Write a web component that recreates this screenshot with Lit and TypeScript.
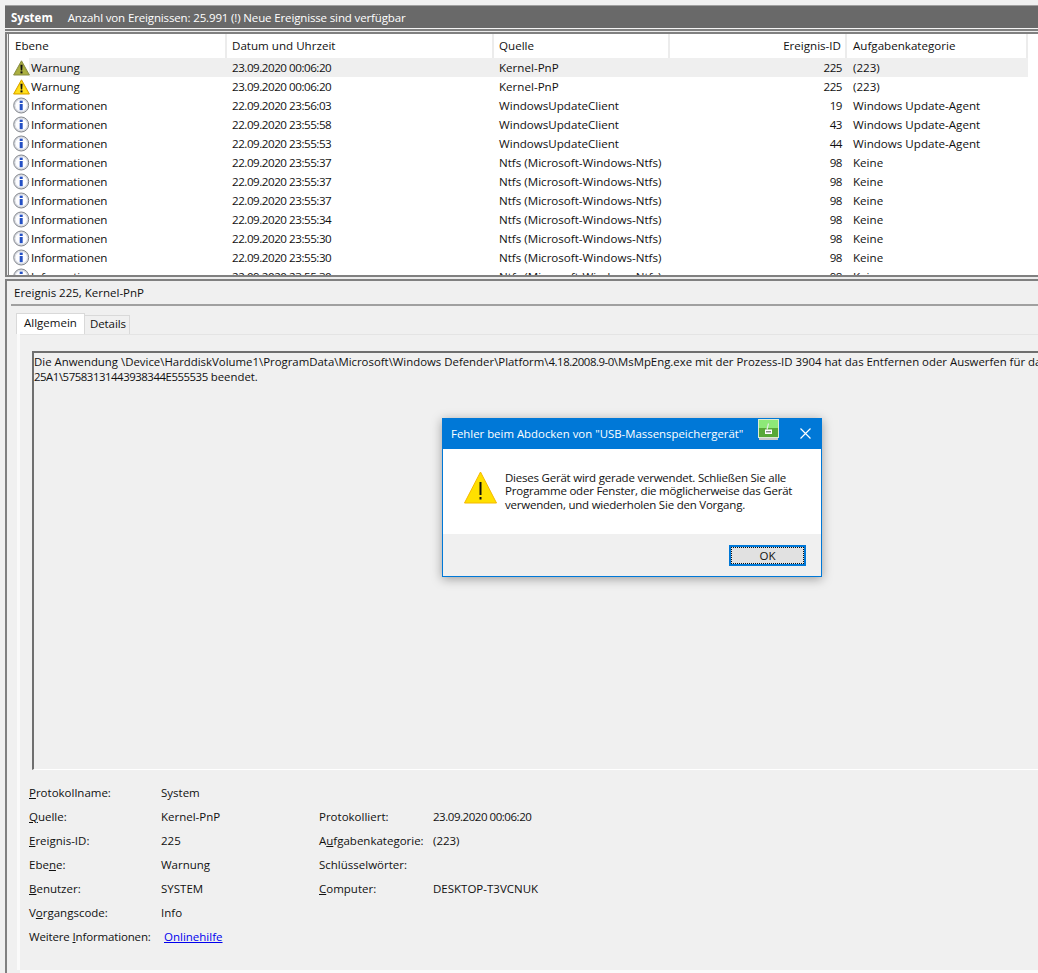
import { LitElement, html, css } from "lit";
import { customElement } from "lit/decorators.js";

const warn = (c1: string, c2: string, c3: string) => html`<svg class="ic" width="17" height="16" viewBox="0 0 17 16"><path d="M8.5 .8 L16.4 15 H.6 Z" fill="${c1}" stroke="${c2}" stroke-linejoin="round"/><path d="M8.5 3 L14.5 14 H2.5 Z" fill="${c3}"/><path d="M7.4 4.8h2.2l-.4 5.6H7.8z" fill="#111"/><rect x="7.5" y="11.4" width="2" height="2" fill="#111"/></svg>`;
const info = html`<svg class="ic" width="17" height="17" viewBox="0 0 17 17"><circle cx="8.2" cy="8.5" r="7.5" fill="#d9dce2" stroke="#85888f" stroke-width="1"/><circle cx="8.2" cy="8.5" r="5.7" fill="#fdfdff"/><rect x="6.7" y="7" width="3" height="6.2" fill="#2450c4"/><rect x="6.7" y="3.6" width="3" height="2.4" fill="#2450c4"/></svg>`;

const rows = [
  ["w", "Warnung", "23.09.2020 00:06:20", "Kernel-PnP", "225", "(223)"],
  ["w", "Warnung", "23.09.2020 00:06:20", "Kernel-PnP", "225", "(223)"],
  ["i", "Informationen", "22.09.2020 23:56:03", "WindowsUpdateClient", "19", "Windows Update-Agent"],
  ["i", "Informationen", "22.09.2020 23:55:58", "WindowsUpdateClient", "43", "Windows Update-Agent"],
  ["i", "Informationen", "22.09.2020 23:55:53", "WindowsUpdateClient", "44", "Windows Update-Agent"],
  ["i", "Informationen", "22.09.2020 23:55:37", "Ntfs (Microsoft-Windows-Ntfs)", "98", "Keine"],
  ["i", "Informationen", "22.09.2020 23:55:37", "Ntfs (Microsoft-Windows-Ntfs)", "98", "Keine"],
  ["i", "Informationen", "22.09.2020 23:55:37", "Ntfs (Microsoft-Windows-Ntfs)", "98", "Keine"],
  ["i", "Informationen", "22.09.2020 23:55:34", "Ntfs (Microsoft-Windows-Ntfs)", "98", "Keine"],
  ["i", "Informationen", "22.09.2020 23:55:30", "Ntfs (Microsoft-Windows-Ntfs)", "98", "Keine"],
  ["i", "Informationen", "22.09.2020 23:55:30", "Ntfs (Microsoft-Windows-Ntfs)", "98", "Keine"],
  ["i", "Informationen", "22.09.2020 23:55:30", "Ntfs (Microsoft-Windows-Ntfs)", "98", "Keine"],
];

@customElement("app-root")
export class AppRoot extends LitElement {
  static styles = css`
    :host { display: block; position: relative; width: 1038px; height: 973px; overflow: hidden; background: #f0f0f0;
      font-family: "Open Sans", "Noto Sans", sans-serif; font-size: 11.5px; color: #111; }
    .outer { display: flex; flex-direction: column; height: 973px; padding-left: 5px; box-sizing: border-box; }
    .titlebar { margin-top: 5px; height: 23px; background: #696969; color: #fff; display: flex; align-items: center; padding-left: 6px; gap: 15px; border-top: 1px solid #a0a0a0; box-sizing: border-box; }
    .titlebar b { font-weight: 700; }
    .titlebar span { letter-spacing: -0.14px; }
    .sep { height: 6px; background: linear-gradient(#f4f4f4 0 1px, #808080 1px 3px, #ececec 3px 4px, #808080 4px 6px); }
    .top { height: 241px; display: flex; padding-left: 4px; background: linear-gradient(90deg, #808080 0 2px, #ececec 2px 3px, #808080 3px 4px); }
    .list { flex: 1; background: #fff; overflow: hidden; }
    .grid { display: grid; grid-template-columns: 218px 267px 176px 177px 181px; width: 1019px; font-size: 11.6px; }
    .th { height: 24px; line-height: 24px; padding-left: 6px; border-right: 2px solid #ececec; box-sizing: border-box; }
    .th.r { text-align: right; padding-right: 4px; padding-left: 0; }
    .row { display: contents; }
    .td { height: 19px; line-height: 19px; padding-left: 6px; white-space: nowrap; box-sizing: border-box; }
    .td.r { text-align: right; padding-right: 5px; padding-left: 0; }
    .num { letter-spacing: -0.46px; }
    .sel .td { background: #efefef; }
    .sel .td.lvl { background: linear-gradient(90deg, #fff 20px, #efefef 20px); }
    .lvl { display: flex; align-items: center; padding-left: 4px; gap: 1px; }
    .lvl span { letter-spacing: -0.12px; }
    .shift { padding-left: 5px; }
    .ic { flex: none; }
    .sep2 { height: 6px; background: linear-gradient(#808080 0 2px, #ececec 2px 4px, #808080 4px 6px); }
    .lower { flex: 1; display: flex; flex-direction: column; border-left: 2px solid #808080; }
    .ltitle { height: 23px; line-height: 23px; padding-left: 3px; margin-left: 4px; border-bottom: 2px solid #a0a0a0; box-sizing: content-box; }
    .tabs { display: flex; margin: 7px 0 0 9px; height: 21px; align-items: flex-end; }
    .tab { padding: 0 3px 0 5px; height: 19px; line-height: 16px; background: #f0f0f0; border: 1px solid #d9d9d9; border-left: 0; border-bottom: 0; box-sizing: border-box; letter-spacing: -0.1px; }
    .tab.on { background: #fff; height: 21px; padding: 0 0 0 7px; line-height: 17px; border-left: 1px solid #d9d9d9; width: 69px; letter-spacing: 0; }
    .page { flex: 1; background: #f0f0f0; margin: 0 0 3px 13px; border-top: 1px solid #e4e4e4; padding: 16px 0 0 12px; box-shadow: -3px 0 0 #fafafa, 0 3px 0 #fafafa; }
    .msg { height: 419px; border-left: 2px solid #6f6f6f; border-top: 2px solid #6f6f6f; border-bottom: 1px solid #fff; padding: 1px 0 0 0; line-height: 15px; white-space: nowrap; overflow: hidden; box-sizing: border-box; font-size: 11.4px; }
    .form { display: grid; grid-template-columns: 132px 158px 114px 1fr; grid-auto-rows: 24px; margin: 10px 0 0 -3px; align-items: center; }
    .tight { letter-spacing: -0.15px; }
    u { text-underline-offset: 1px; }
    a { color: #0000ee; margin-left: 3px; }
    .dlg { position: absolute; left: 442px; top: 418px; width: 380px; height: 159px; box-sizing: border-box; border: 1px solid #0078d7; background: #fff; box-shadow: 0 2px 10px rgba(0,0,0,.35); display: flex; flex-direction: column; }
    .dt { height: 30px; box-sizing: border-box; padding: 0 0 2px 8px; background: #0078d7; color: #fff; display: flex; align-items: center; font-size: 11.4px; position: relative; flex: none; }
    .x { position: absolute; right: 10px; top: 9px; }
    .usb { position: absolute; left: 315px; top: 0; }
    .dbody { flex: 1; display: flex; padding: 22px 0 0 21px; gap: 8px; line-height: 13.4px; letter-spacing: -0.22px; }
    .big { flex: none; }
    .dfoot { height: 42px; background: #f0f0f0; flex: none; display: flex; justify-content: flex-end; align-items: center; padding-right: 15px; }
    .ok { width: 77px; height: 21px; box-sizing: border-box; border: 2px solid #0078d7; background: #e1e1e1; outline: 1px dotted #111; outline-offset: -3px; display: flex; align-items: center; justify-content: center; }
  `;

  render() {
    return html`<div class="outer">
      <div class="titlebar"><b>System</b><span>Anzahl von Ereignissen: 25.991 (!) Neue Ereignisse sind verfügbar</span></div>
      <div class="sep"></div>
      <div class="top"><div class="list"><div class="grid">
        <div class="th">Ebene</div><div class="th shift">Datum und Uhrzeit</div><div class="th shift">Quelle</div><div class="th r">Ereignis-ID</div><div class="th">Aufgabenkategorie</div>
        ${rows.map((r, i) => html`<div class="row ${i === 0 ? "sel" : ""}">
          <div class="td lvl">${r[0] === "w" ? (i === 0 ? warn("#a4a83e", "#8a8e44", "#acb040") : warn("#ffd800", "#d8a000", "#ffe020")) : info}<span>${r[1]}</span></div>
          <div class="td num shift">${r[2]}</div><div class="td shift">${r[3]}</div><div class="td r num">${r[4]}</div><div class="td">${r[5]}</div></div>`)}
      </div></div></div>
      <div class="sep2"></div>
      <div class="lower">
        <div class="ltitle">Ereignis 225, Kernel-PnP</div>
        <div class="tabs"><div class="tab on">Allgemein</div><div class="tab">Details</div></div>
        <div class="page">
          <div class="msg">Die Anwendung \\Device\\HarddiskVolume1\\ProgramData\\Microsoft\\Windows Defender\\Platform\\<span class="num">4.18.2008.9-0</span>\\MsMpEng.exe mit der Prozess-ID 3904 hat das Entfernen oder Auswerfen für das Gerät USB\\VID_0781&PID_5583\\<br><span class="num">25A1\\57583131443938344E555535</span> beendet.</div>
          <div class="form">
            <span><u>P</u>rotokollname:</span><span>System</span><span></span><span></span>
            <span><u>Q</u>uelle:</span><span>Kernel-PnP</span><span>Protokolliert:</span><span class="num">23.09.2020 00:06:20</span>
            <span><u>E</u>reignis-ID:</span><span>225</span><span>A<u>u</u>fgabenkategorie:</span><span>(223)</span>
            <span>Ebe<u>n</u>e:</span><span>Warnung</span><span>Schlüsselwörter:</span><span></span>
            <span><u>B</u>enutzer:</span><span>SYSTEM</span><span><u>C</u>omputer:</span><span>DESKTOP-T3VCNUK</span>
            <span>V<u>o</u>rgangscode:</span><span>Info</span><span></span><span></span>
            <span class="tight">Weitere <u>I</u>nformationen:</span><span><a href="#">Onlinehilfe</a></span><span></span><span></span>
          </div>
        </div>
      </div>
    </div>
    <div class="dlg">
      <div class="dt">Fehler beim Abdocken von "USB-Massenspeichergerät"
        <svg class="usb" width="21" height="21" viewBox="0 0 21 21"><rect x=".5" y=".5" width="20" height="18" fill="#58a838" stroke="#dcebd4"/><rect x="1" y="1" width="19" height="8" fill="#8de878"/><rect x="1" y="19" width="19" height="2" fill="#c8c8c8"/><path d="M10.5 4.5l-1.5 6" stroke="#e8e8e8" stroke-width="1.2" fill="none"/><rect x="7" y="10.5" width="7" height="4.5" fill="#fff"/><rect x="8" y="12.3" width="5" height="1" fill="#555"/></svg>
        <svg class="x" width="11" height="11" viewBox="0 0 11 11"><path d="M.5 .5l10 10M10.5 .5l-10 10" stroke="#fff" stroke-width="1.2"/></svg>
      </div>
      <div class="dbody">
        <svg class="big" width="33" height="33" viewBox="0 0 33 33"><path d="M16.5 1 L32.5 32 H.5 Z" fill="#ffe000" stroke="#f5b800" stroke-linejoin="round"/><rect x="15.5" y="11" width="2" height="13" fill="#111"/><rect x="15.5" y="26" width="2" height="2.5" fill="#111"/></svg>
        <div>Dieses Gerät wird gerade verwendet. Schließen Sie alle<br>Programme oder Fenster, die möglicherweise das Gerät<br>verwenden, und wiederholen Sie den Vorgang.</div>
      </div>
      <div class="dfoot"><div class="ok">OK</div></div>
    </div>`;
  }
}
